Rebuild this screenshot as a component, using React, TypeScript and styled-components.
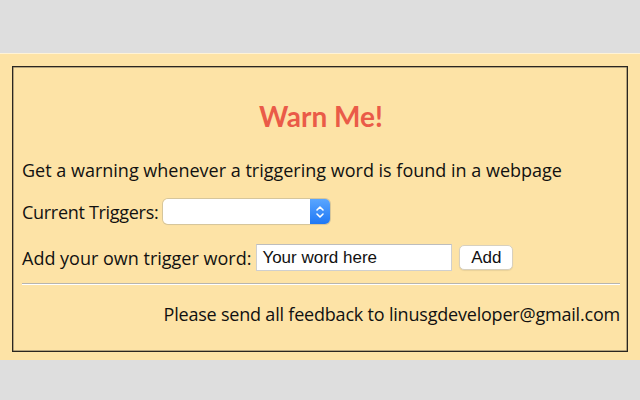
import React from "react";
import styled, { createGlobalStyle } from "styled-components";

const Global = createGlobalStyle`
  html, body { margin: 0; padding: 0; background: #dedede; }
  body { font-family: "Open Sans", "DejaVu Sans", sans-serif; }
`;

const Band = styled.div`
  margin-top: 53px;
  border-top: 1px solid #fff3d6;
  background: #fde3a6;
  padding: 12px 12px 9px 12px;
  height: 307px;
  box-sizing: border-box;
`;

const Panel = styled.div`
  border: 1px solid #2a2620;
  box-shadow: inset 0 0 0 0.5px #6b6250;
  height: 286px;
  box-sizing: border-box;
  padding: 0 7px 0 9px;
  display: flex;
  flex-direction: column;
  color: #111;
  font-size: 18px;
`;

const Title = styled.h1`
  margin: 33px 0 0 0;
  text-align: center;
  color: #ea5b48;
  font-family: "Lato", "Open Sans", sans-serif;
  font-size: 28px;
  font-weight: 700;
  line-height: 32px;
`;

const Line = styled.div<{ $top: number; $gap?: number }>`
  margin-top: ${(p) => p.$top}px;
  display: flex;
  align-items: center;
  gap: ${(p) => p.$gap ?? 5}px;
  line-height: 22px;
  white-space: nowrap;
`;

const Label = styled.span<{ $spacing?: number }>`
  letter-spacing: ${(p) => p.$spacing ?? 0}px;
`;

const SelectBox = styled.div`
  display: flex;
  width: 167px;
  height: 25px;
  border-radius: 5px;
  overflow: hidden;
  box-shadow: 0 0 0 1px #d6c69c, 0 1px 1px rgba(0,0,0,0.08);
`;

const NativeSelect = styled.select`
  appearance: none;
  flex: 1;
  border: none;
  background: #fff;
  outline: none;
  margin: 0;
`;

const Stepper = styled.div`
  width: 20px;
  background: linear-gradient(#5aa6ff, #1f78f5);
  display: flex;
  align-items: center;
  justify-content: center;
`;

const TextInput = styled.input`
  width: 196px;
  height: 27px;
  box-sizing: border-box;
  border: 1px solid #cfcfcf;
  border-top-color: #bdbdbd;
  background: #fff;
  padding: 0 5px;
  font-family: "Liberation Sans", Arial, sans-serif;
  font-size: 17px;
  color: #111;
  outline: none;
  &::placeholder { color: #111; }
`;

const AddButton = styled.button`
  margin-left: 2px;
  width: 54px;
  height: 25px;
  border: 1px solid #d7d0bf;
  border-radius: 5px;
  background: #fff;
  font-family: "Liberation Sans", Arial, sans-serif;
  font-size: 17px;
  color: #111;
  padding: 0;
  box-shadow: 0 1px 1px rgba(0,0,0,0.08);
`;

const Rule = styled.hr`
  margin: 12px 0 0 0;
  border: none;
  border-top: 1px solid #b8b5ae;
  border-bottom: 1px solid #ffffff;
  height: 0;
  width: 100%;
`;

const Footer = styled.div`
  margin-top: 18px;
  text-align: right;
  line-height: 22px;
  white-space: nowrap;
  letter-spacing: -0.2px;
`;

export default function App() {
  return (
    <>
      <Global />
      <Band>
        <Panel>
          <Title>Warn Me!</Title>
          <Line $top={27}>Get a warning whenever a triggering word is found in a webpage</Line>
          <Line $top={18} $gap={5}>
            <Label $spacing={-0.3}>Current Triggers:</Label>
            <SelectBox>
              <NativeSelect />
              <Stepper>
                <svg width="10" height="14" viewBox="0 0 10 14" fill="none" stroke="#fff" strokeWidth="1.6" strokeLinecap="round" strokeLinejoin="round">
                  <path d="M2 5 L5 2 L8 5" />
                  <path d="M2 9 L5 12 L8 9" />
                </svg>
              </Stepper>
            </SelectBox>
          </Line>
          <Line $top={20}>
            <Label>Add your own trigger word:</Label>
            <TextInput defaultValue="Your word here" />
            <AddButton>Add</AddButton>
          </Line>
          <Rule />
          <Footer>Please send all feedback to linusgdeveloper@gmail.com</Footer>
        </Panel>
      </Band>
    </>
  );
}
